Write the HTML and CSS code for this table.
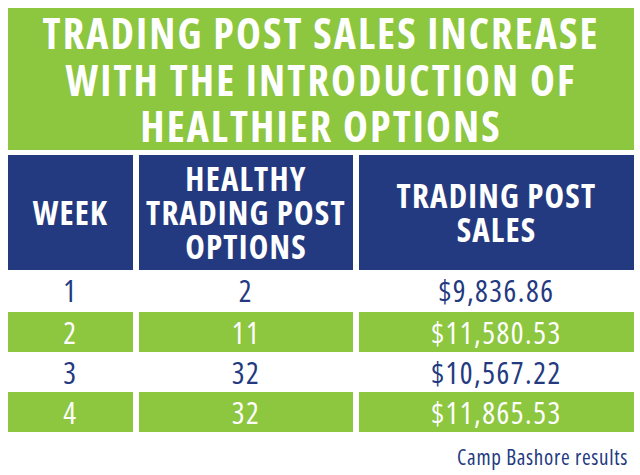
FILE: index.html
```html
<!DOCTYPE html>
<html lang="en">
<head>
<meta charset="utf-8">
<title>Trading Post Sales</title>
<link rel="stylesheet" href="styles.css">
</head>
<body>
<main class="page">
  <h1 class="title">TRADING POST SALES INCREASE<br>WITH THE INTRODUCTION OF<br>HEALTHIER OPTIONS</h1>
  <div class="table">
    <div class="cell head">WEEK</div>
    <div class="cell head">HEALTHY<br>TRADING POST<br>OPTIONS</div>
    <div class="cell head">TRADING POST<br>SALES</div>

    <div class="cell row first">1</div>
    <div class="cell row first">2</div>
    <div class="cell row first">$9,836.86</div>

    <div class="cell row alt">2</div>
    <div class="cell row alt">11</div>
    <div class="cell row alt">$11,580.53</div>

    <div class="cell row">3</div>
    <div class="cell row">32</div>
    <div class="cell row">$10,567.22</div>

    <div class="cell row alt">4</div>
    <div class="cell row alt">32</div>
    <div class="cell row alt">$11,865.53</div>
  </div>
  <p class="source">Camp Bashore results</p>
</main>
</body>
</html>
```
FILE: styles.css
```css
html, body {
  margin: 0;
  padding: 0;
  background: #ffffff;
}

.page {
  width: 640px;
  height: 475px;
  box-sizing: border-box;
  padding: 8px 6px 0 8px;
  font-family: "Open Sans", "DejaVu Sans", sans-serif;
  font-stretch: condensed;
}

.title {
  margin: 0;
  height: 142px;
  box-sizing: border-box;
  padding-top: 2px;
  background: #8dc63f;
  color: #ffffff;
  font-size: 42px;
  font-weight: 700;
  line-height: 46.5px;
  letter-spacing: 2.1px;
  text-align: center;
}

.table {
  display: grid;
  grid-template-columns: 125px 214px 1fr;
  grid-template-rows: 116px 41px 40px 40px 40px;
  column-gap: 6px;
  margin-top: 5px;
}

.cell {
  display: flex;
  align-items: center;
  justify-content: center;
  text-align: center;
}

.head {
  background: #243a80;
  color: #ffffff;
  font-size: 33px;
  font-weight: 700;
  line-height: 34px;
  letter-spacing: 1.2px;
  margin-bottom: 1px;
}

.row {
  color: #243a80;
  font-size: 30px;
  font-weight: 400;
  letter-spacing: 1.5px;
}

.first {
  padding-bottom: 2px;
}

.alt {
  background: #8dc63f;
  color: #ffffff;
}

.source {
  margin: 11px 6px 0 0;
  text-align: right;
  color: #243a80;
  font-size: 21px;
  letter-spacing: 0.7px;
}
```
